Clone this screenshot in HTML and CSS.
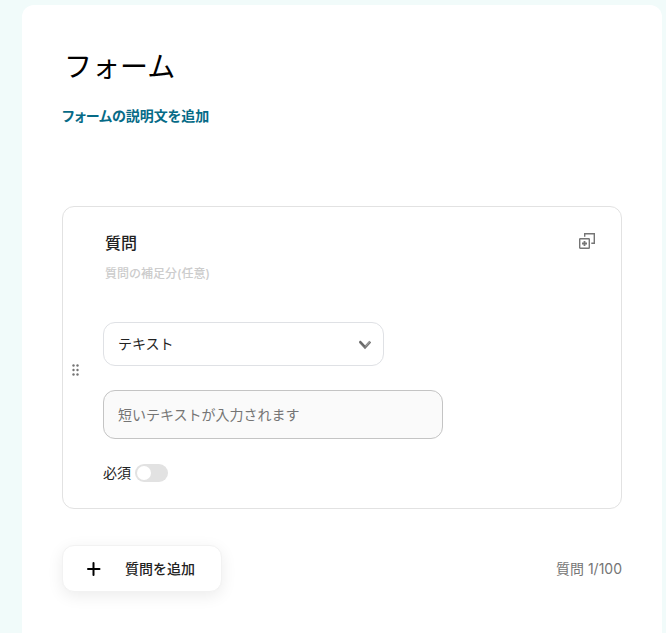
FILE: index.html
```html
<!DOCTYPE html>
<html lang="ja">
<head>
    <meta charset="UTF-8">
    <meta name="viewport" content="width=device-width, initial-scale=1.0">
    <title>フォーム</title>
    <link rel="stylesheet" href="styles.css">
</head>
<body>
    <main class="panel">
        <h1>フォーム</h1>
        <a class="add-description" href="#">フォームの説明文を追加</a>

        <section class="question">
            <button class="drag" type="button" aria-label="並べ替え">
                <svg width="8" height="12" viewBox="0 0 8 12" fill="#757575">
                    <circle cx="2.5" cy="1.5" r="1.2"/><circle cx="6.5" cy="1.5" r="1.2"/>
                    <circle cx="2.5" cy="6" r="1.2"/><circle cx="6.5" cy="6" r="1.2"/>
                    <circle cx="2.5" cy="10.5" r="1.2"/><circle cx="6.5" cy="10.5" r="1.2"/>
                </svg>
            </button>
            <div class="question-body">
                <div class="question-head">
                    <div class="question-text">
                        <h2>質問</h2>
                        <p>質問の補足分(任意)</p>
                    </div>
                    <button class="copy" type="button" aria-label="質問を複製">
                        <svg width="16" height="16" viewBox="0 0 16 16" fill="none" stroke="#757575" stroke-width="1.4">
                            <path d="M5.7 3.7v-3h9.6v9.6h-3"/>
                            <rect x="0.7" y="5.7" width="9.6" height="9.6" rx="0.6"/>
                            <path d="M5.5 8v5M3 10.5h5" stroke-width="1.8"/>
                        </svg>
                    </button>
                </div>

                <div class="select-box">
                    <select aria-label="回答の種類">
                        <option>テキスト</option>
                    </select>
                    <svg class="arrow" width="12" height="10" viewBox="0 0 12 10" fill="none">
                        <path d="M0.8 1.6L6 7.4l5.2-5.8" stroke="#777" stroke-width="2.6"/>
                        <path d="M0.6 1L6 6.6" stroke="#666" stroke-width="1.4"/>
                        <path d="M6.4 6.4l4.6-5" stroke="#bbb" stroke-width="0.8"/>
                    </svg>
                </div>

                <input class="answer" type="text" placeholder="短いテキストが入力されます" aria-label="回答" readonly>

                <div class="required">
                    <label for="required">必須</label>
                    <input type="checkbox" id="required" role="switch">
                </div>
            </div>
        </section>

        <div class="bottom">
            <button class="add" type="button">
                <svg width="14" height="14" viewBox="0 0 14 14" stroke="#000" stroke-width="2" stroke-linecap="round">
                    <path d="M6.5 1v12M1 7h11.5"/>
                </svg>
                質問を追加
            </button>
            <p class="count">質問 1/100</p>
        </div>
    </main>
</body>
</html>
```

FILE: styles.css
```css
* {
    box-sizing: border-box;
}
body {
    font-family: Inter, "Noto Sans CJK JP", sans-serif;
    font-size: 14px;
    line-height: 20px;
    background-color: #f1fbfa;
    color: #222;
    margin: 0;
    padding: 5px 4px 0 22px;
}
h1, h2, p {
    margin: 0;
}
button, input, select {
    font: inherit;
    color: inherit;
}
button {
    border: 0;
    padding: 0;
    background: none;
    cursor: pointer;
}
svg {
    display: block;
}
.panel {
    background-color: #fff;
    border-radius: 12px 12px 0 0;
    padding: 40px;
    min-height: 100vh;
}
h1 {
    padding-left: 2px;
    font-size: 28px;
    font-weight: 400;
    line-height: 44px;
    color: #000;
}
.add-description {
    display: block;
    width: fit-content;
    margin-top: 17px;
    color: #066b87;
    font-weight: 600;
    font-feature-settings: "palt";
    text-decoration: none;
}

/* 質問カード */
.question {
    display: flex;
    margin-top: 80px;
    border: 1px solid #e2e2e2;
    border-radius: 12px;
}
.drag {
    width: 24px;
    margin-right: 16px;
    padding: 24px 0 0 8px;
    cursor: grab;
}
.question-body {
    flex: 1;
    padding: 24px 26px 25px 0;
}
.question-head {
    display: flex;
    justify-content: space-between;
    align-items: flex-start;
}
.question-text {
    padding-left: 2px;
}
h2 {
    font-size: 16px;
    font-weight: 500;
    line-height: 24px;
}
.question-text p {
    margin-top: 9px;
    font-size: 12px;
    font-weight: 500;
    color: #ccc;
}
.copy {
    margin-top: 2px;
}

.select-box {
    position: relative;
    width: 100%;
    max-width: 281px;
    margin-top: 38px;
}
select {
    appearance: none;
    display: block;
    width: 100%;
    height: 44px;
    padding: 0 40px 0 14px;
    border: 1px solid #dfe1e5;
    border-radius: 12px;
    background-color: #fff;
}
.arrow {
    position: absolute;
    right: 13px;
    top: 18px;
    pointer-events: none;
}
.answer {
    display: block;
    width: 100%;
    max-width: 340px;
    height: 49px;
    margin-top: 24px;
    padding: 0 14px;
    border: 1px solid #c4c4c4;
    border-radius: 12px;
    background-color: #fafafa;
}
.answer::placeholder {
    color: #757575;
    opacity: 1;
}
.required {
    display: flex;
    align-items: center;
    gap: 4px;
    margin-top: 24px;
}
.required input {
    appearance: none;
    width: 33px;
    height: 18px;
    margin: 0;
    padding: 2px;
    border-radius: 9px;
    background-color: #e2e2e2;
    cursor: pointer;
}
.required input::before {
    content: "";
    display: block;
    width: 14px;
    height: 14px;
    border-radius: 50%;
    background-color: #fff;
}
.required input:checked {
    background-color: #066b87;
}
.required input:checked::before {
    margin-left: auto;
}

.bottom {
    display: flex;
    justify-content: space-between;
    align-items: center;
    margin-top: 36px;
}
.add {
    display: flex;
    align-items: center;
    gap: 24px;
    height: 47px;
    padding: 0 26px 0 24px;
    border: 1px solid #f2f2f2;
    border-radius: 12px;
    background-color: #fff;
    box-shadow: 0 4px 16px rgba(0, 0, 0, 0.08);
    font-weight: 500;
}
.count {
    color: #757575;
}
```
